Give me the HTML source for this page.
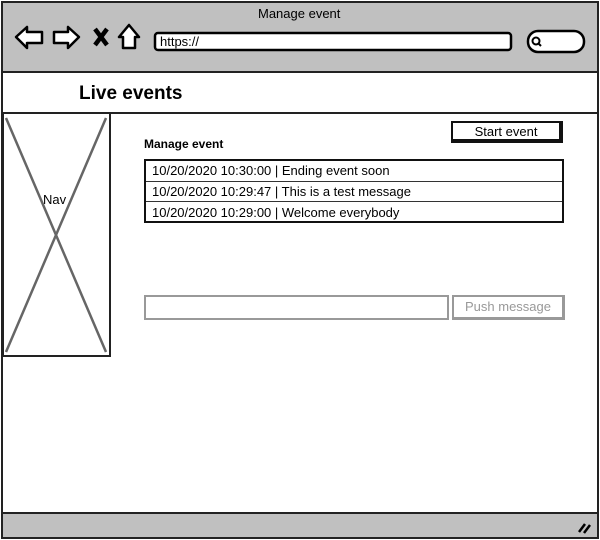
<!DOCTYPE html>
<html><head><meta charset="utf-8"><style>
*{margin:0;padding:0;box-sizing:border-box}
body{width:600px;height:540px;background:#fff;position:relative;overflow:hidden;font-family:"Liberation Sans",sans-serif;color:#000}
.abs{position:absolute}
.t{font-size:13px;white-space:nowrap}
</style></head><body>
<div class="abs" style="left:1px;top:1px;width:598px;height:538px;border:2px solid #222"></div>
<div class="abs" style="left:3px;top:3px;width:594px;height:70px;background:#c0c0c0;border-bottom:2px solid #222"></div>
<div class="abs t" style="left:258px;top:6px;font-size:13px">Manage event</div>
<svg class="abs" style="left:0;top:0" width="600" height="75">
<g fill="#fff" stroke="#000" stroke-width="2.5" stroke-linejoin="round">
<path d="M16 37 L27 27 L27 32 L42 32 L42 43 L27 43 L27 48 Z"/>
<path d="M79 37 L68 27 L68 32 L54 32 L54 43 L68 43 L68 48 Z"/>
<path d="M129 25 L119 37 L123 37 L123 48 L135 48 L135 37 L139 37 Z"/>
</g>
<path d="M95 29 L107 45 M107 29 L95 45" stroke="#000" stroke-width="4.5"/>
<rect x="155" y="33" width="356" height="17" rx="3" fill="#fff" stroke="#000" stroke-width="2.5"/>
<rect x="528" y="31" width="56" height="21" rx="10" fill="#fff" stroke="#000" stroke-width="2.5"/>
<circle cx="536" cy="41" r="3.5" fill="none" stroke="#000" stroke-width="2"/>
<path d="M538 43 L541 46" stroke="#000" stroke-width="2"/>
</svg>
<div class="abs t" style="left:160px;top:34px;font-size:13px">https://</div>
<div class="abs" style="left:79px;top:83px;font-size:19px;font-weight:bold">Live events</div>
<div class="abs" style="left:3px;top:112px;width:594px;height:2px;background:#222"></div>
<div class="abs" style="left:2px;top:112px;width:109px;height:245px;border:2px solid #222"></div>
<svg class="abs" style="left:0;top:0" width="120" height="360"><path d="M6 118 L106 352 M106 118 L6 352" stroke="#666" stroke-width="2.5"/></svg>
<div class="abs t" style="left:43px;top:192px;font-size:13px;background:#fff0">Nav</div>
<div class="abs" style="left:144px;top:137px;font-size:12px;font-weight:bold">Manage event</div>
<div class="abs" style="left:451px;top:121px;width:112px;height:22px;border:2px solid #111;border-right-width:4px;border-bottom-width:4px;background:#fff;text-align:center;font-size:13px;line-height:17px">Start event</div>
<div class="abs" style="left:144px;top:159px;width:420px;height:64px;border:2px solid #111"></div>
<div class="abs" style="left:146px;top:181px;width:416px;height:1px;background:#333"></div>
<div class="abs" style="left:146px;top:201px;width:416px;height:1px;background:#333"></div>
<div class="abs t" style="left:152px;top:163px">10/20/2020 10:30:00 | Ending event soon</div>
<div class="abs t" style="left:152px;top:184px">10/20/2020 10:29:47 | This is a test message</div>
<div class="abs t" style="left:152px;top:205px">10/20/2020 10:29:00 | Welcome everybody</div>
<div class="abs" style="left:144px;top:295px;width:305px;height:25px;border:2px solid #999"></div>
<div class="abs" style="left:452px;top:295px;width:113px;height:25px;border:2px solid #999;border-right-width:3px;border-bottom-width:3px;color:#999;text-align:center;font-size:13px;line-height:19px">Push message</div>
<div class="abs" style="left:3px;top:512px;width:594px;height:25px;background:#c0c0c0;border-top:2px solid #222"></div>
<svg class="abs" style="left:575px;top:518px" width="20" height="18"><path d="M4 14 L10 6 M9 15 L15 7" stroke="#000" stroke-width="2.5"/></svg>
</body></html>
